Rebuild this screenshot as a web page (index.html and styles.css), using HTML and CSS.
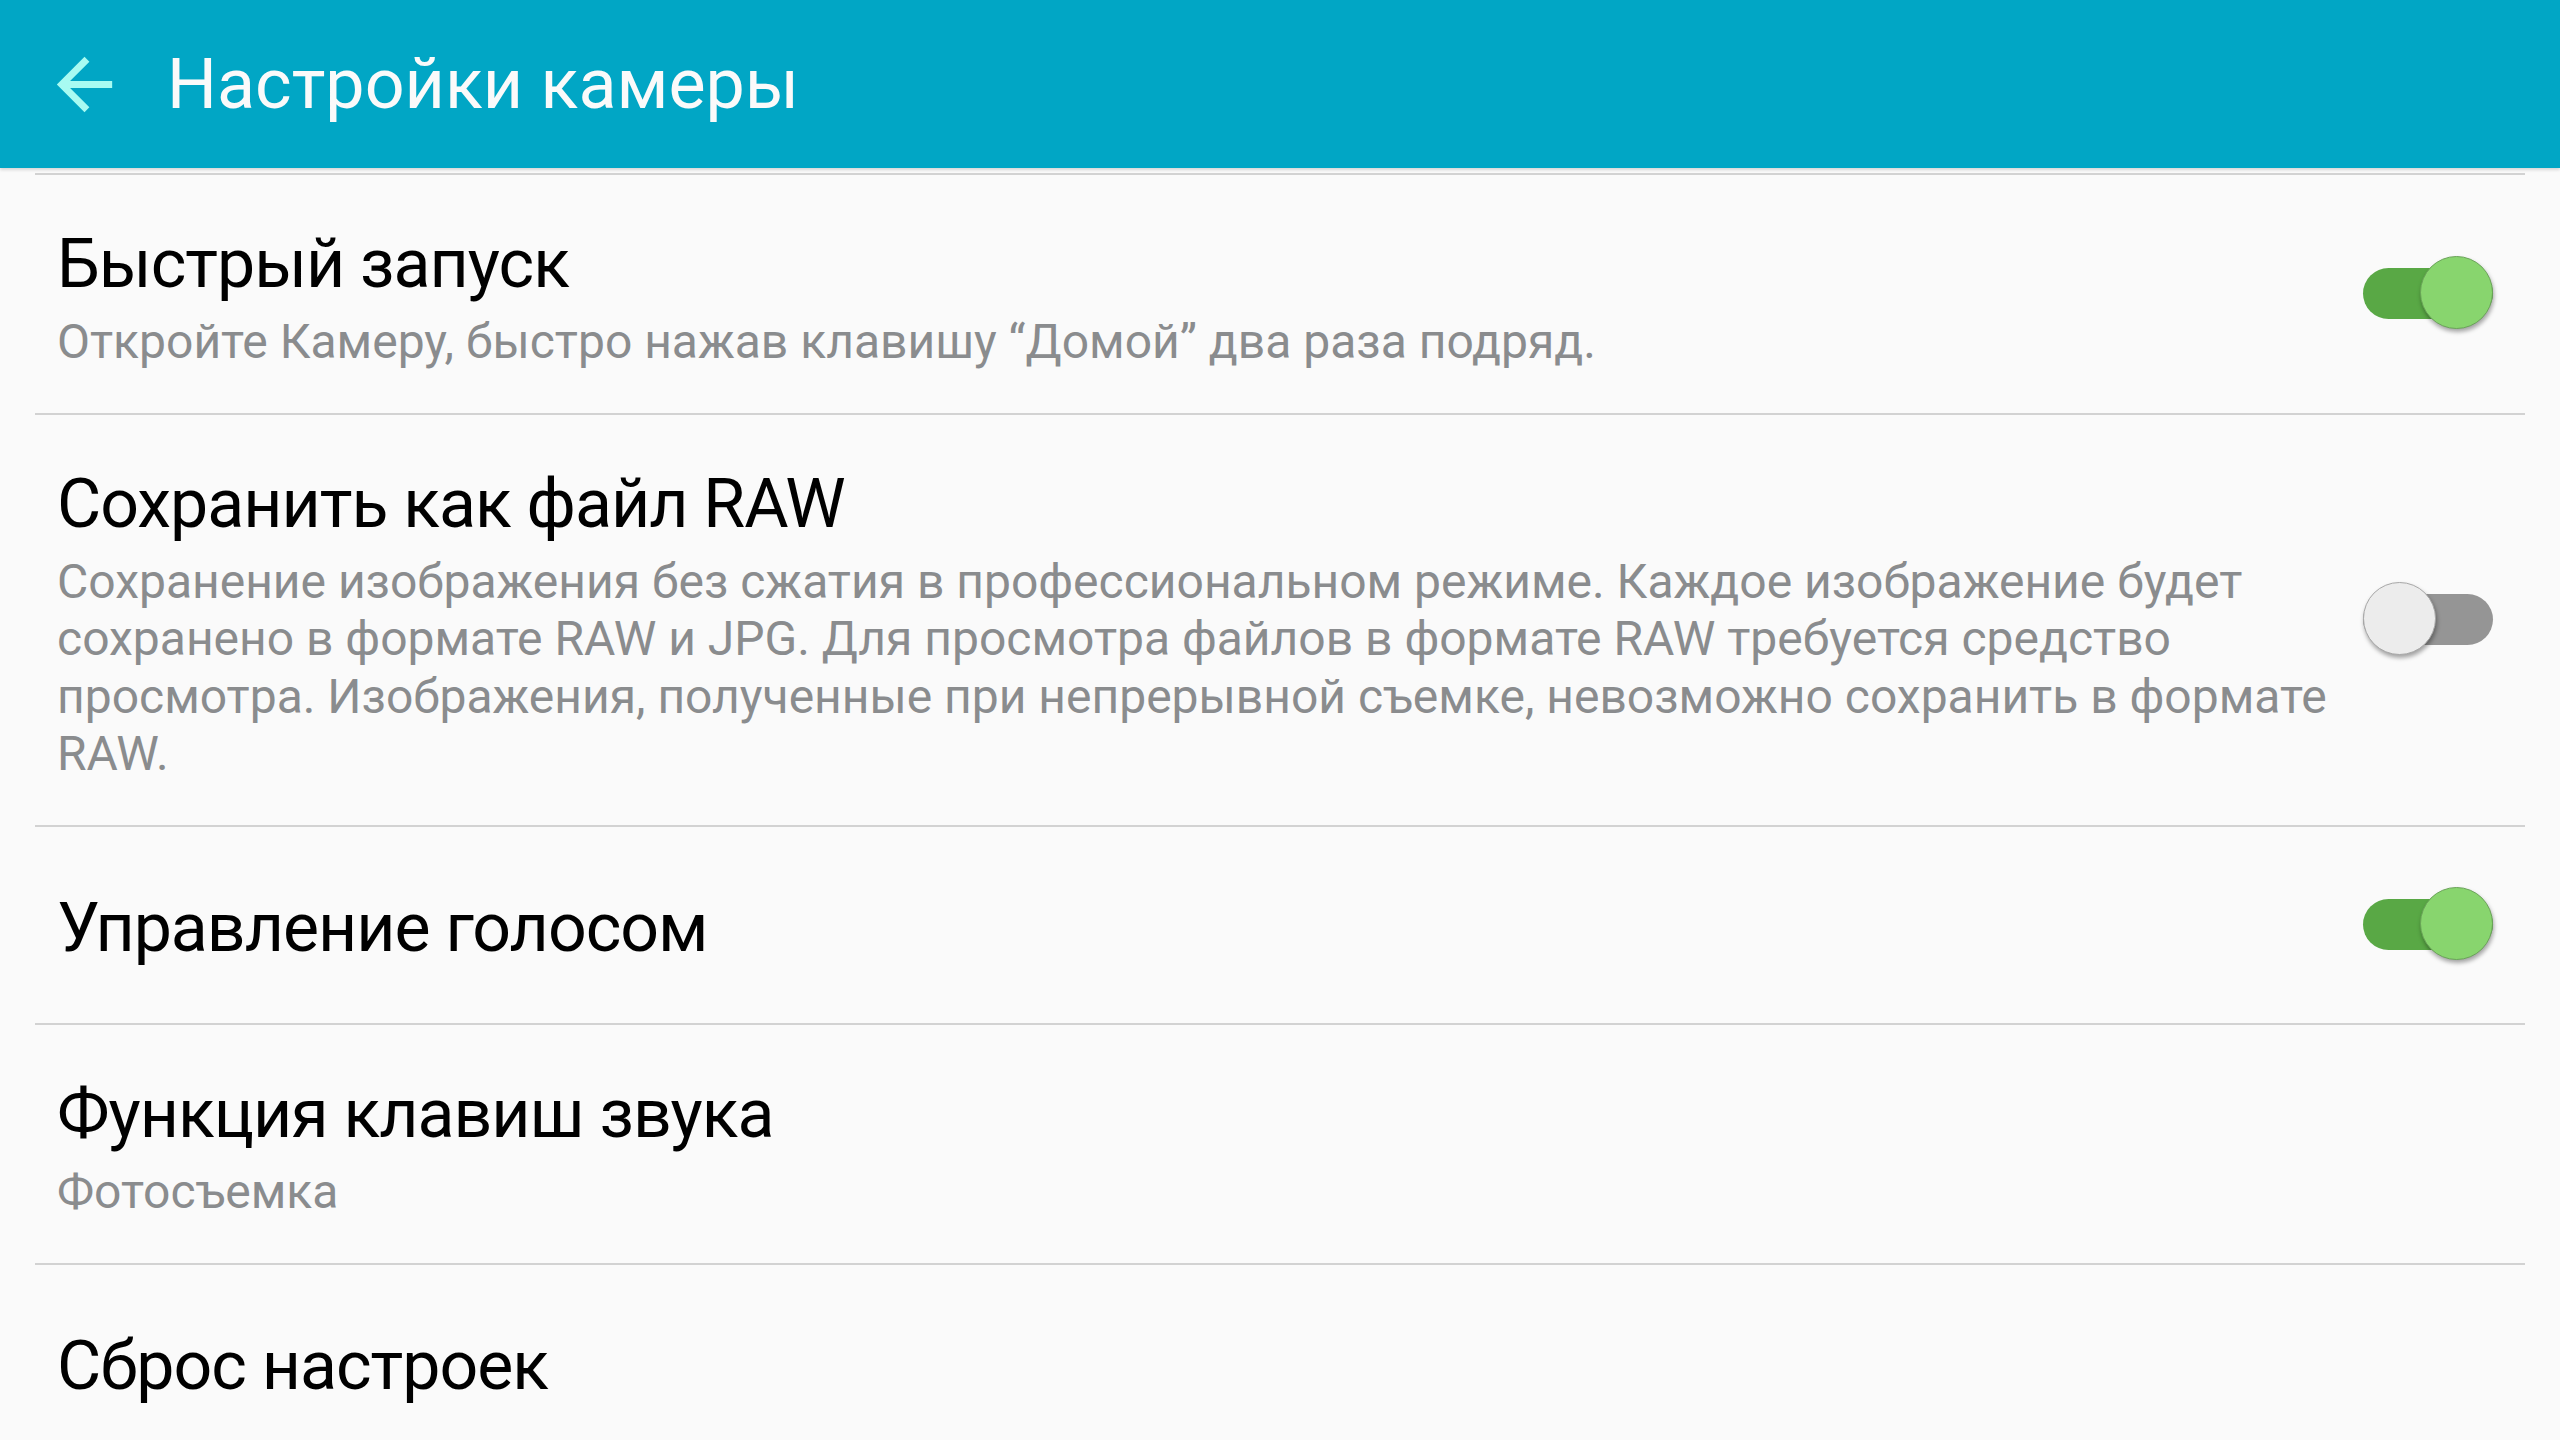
FILE: index.html
```html
<!DOCTYPE html>
<html lang="ru">
<head>
<meta charset="utf-8">
<title>Настройки камеры</title>
<link rel="stylesheet" href="styles.css">
</head>
<body>
<header class="appbar">
  <svg class="back" viewBox="0 0 24 24" width="83" height="83" aria-hidden="true">
    <path d="M20 11H7.83l5.59-5.59L12 4l-8 8 8 8 1.41-1.41L7.83 13H20v-2z" fill="#a8fbf2"/>
  </svg>
  <h1 class="appbar-title">Настройки камеры</h1>
</header>
<main class="list">
  <div class="row">
    <div class="text">
      <div class="title">Быстрый запуск</div>
      <div class="summary">Откройте Камеру, быстро нажав клавишу “Домой” два раза подряд.</div>
    </div>
    <div class="switch on"><span class="track"></span><span class="thumb"></span></div>
  </div>
  <div class="row">
    <div class="text">
      <div class="title">Сохранить как файл RAW</div>
      <div class="summary">Сохранение изображения без сжатия в профессиональном режиме. Каждое изображение будет сохранено в формате RAW и JPG. Для просмотра файлов в формате RAW требуется средство просмотра. Изображения, полученные при непрерывной съемке, невозможно сохранить в формате RAW.</div>
    </div>
    <div class="switch off"><span class="track"></span><span class="thumb"></span></div>
  </div>
  <div class="row single">
    <div class="text">
      <div class="title">Управление голосом</div>
    </div>
    <div class="switch on"><span class="track"></span><span class="thumb"></span></div>
  </div>
  <div class="row">
    <div class="text">
      <div class="title">Функция клавиш звука</div>
      <div class="summary">Фотосъемка</div>
    </div>
  </div>
  <div class="row single">
    <div class="text">
      <div class="title">Сброс настроек</div>
    </div>
  </div>
</main>
</body>
</html>
```
FILE: styles.css
```css
html, body {
  margin: 0;
  padding: 0;
  background: #fafafa;
  font-family: Roboto, "Noto Sans", "Liberation Sans", sans-serif;
  overflow: hidden;
}

.appbar {
  height: 168px;
  background: #01a6c5;
  display: flex;
  align-items: center;
  padding-left: 43px;
  box-shadow: 0 2px 3px rgba(0, 0, 0, 0.14);
  position: relative;
  z-index: 1;
}

.back {
  display: block;
  flex: none;
}

.appbar-title {
  margin: 0 0 0 41px;
  font-size: 70px;
  font-weight: 400;
  color: #fafafa;
  line-height: 80px;
}

.list {
  margin: 5px 35px 0;
}

.row {
  border-top: 2px solid #d2d2d2;
  display: flex;
  align-items: center;
  padding: 0 32px 0 22px;
}

.text {
  flex: 1;
  min-width: 0;
  margin-right: 20px;
  padding: 49px 0 42px;
}

.row.single .text {
  padding-top: 61px;
  padding-bottom: 55px;
}

.title {
  font-size: 68px;
  line-height: 80px;
  letter-spacing: -1px;
  color: #000;
}

.summary {
  margin-top: 9px;
  font-size: 48px;
  line-height: 57.6px;
  color: #8a8c8e;
}

.switch {
  position: relative;
  flex: none;
  width: 130px;
  height: 74px;
  margin-top: -2px;
}

.track {
  position: absolute;
  left: 0;
  right: 0;
  top: 12px;
  height: 51px;
  border-radius: 26px;
}

.thumb {
  position: absolute;
  top: 0;
  width: 73px;
  height: 73px;
  border-radius: 50%;
  box-sizing: border-box;
  box-shadow: 1px 3px 4px rgba(0, 0, 0, 0.35);
}

.switch.on .track { background: #59a845; }
.switch.on .thumb {
  right: 0;
  background: #88d56e;
  border: 1px solid #6aa458;
}

.switch.off .track { background: #959595; }
.switch.off .thumb {
  left: 0;
  background: #ececec;
  border: 1px solid #a8a8a8;
}
```
